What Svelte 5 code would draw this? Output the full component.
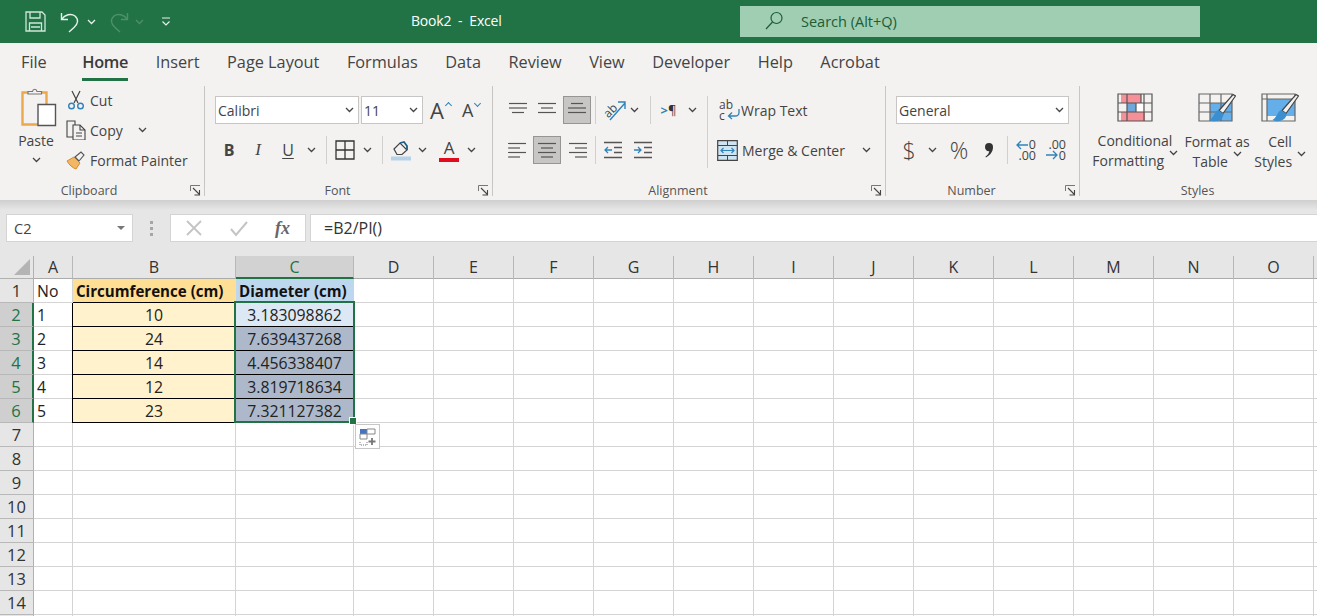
<script>
	const tabs = ['File', 'Home', 'Insert', 'Page Layout', 'Formulas', 'Data', 'Review', 'View', 'Developer', 'Help', 'Acrobat'];
	const columns = ['A', 'B', 'C', 'D', 'E', 'F', 'G', 'H', 'I', 'J', 'K', 'L', 'M', 'N', 'O', ''];
	const data = [
		['No', 'Circumference (cm)', 'Diameter (cm)'],
		['1', '10', '3.183098862'],
		['2', '24', '7.639437268'],
		['3', '14', '4.456338407'],
		['4', '12', '3.819718634'],
		['5', '23', '7.321127382']
	];
	const rowNumbers = Array.from({ length: 15 }, (_, i) => i + 1);

	function cellClass(row, col) {
		const names = ['cell'];
		if (row === 0 && col === 1) names.push('head-b');
		if (row === 0 && col === 2) names.push('head-c');
		if (row === 0 && (col === 1 || col === 2)) names.push('bold');
		if (row > 0 && row < 6 && col === 1) names.push('boxed', 'cream');
		if (row > 0 && row < 6 && col === 2) names.push('boxed', row === 1 ? 'active' : 'picked');
		if (row > 0 && (col === 1 || col === 2)) names.push('center');
		return names.join(' ');
	}
</script>

{#snippet chev(color = '#444')}
	<svg class="chev" width="9" height="6" viewBox="0 0 9 6"><path d="M1 1l3.5 3.5L8 1" fill="none" stroke={color} stroke-width="1.3" /></svg>
{/snippet}

{#snippet launcher()}
	<svg class="launcher" width="11" height="11" viewBox="0 0 11 11">
		<path d="M.5 6V.5h9.500" fill="none" stroke="#777" />
		<path d="M3 3l6 6M9.500 5v5h-5" fill="none" stroke="#444" stroke-width="1.100" />
	</svg>
{/snippet}

{#snippet lines(widths, x = 0)}
	<svg width="20" height="18" viewBox="0 0 20 18">
		{#each widths as w, i (i)}
			<path d={`M${x === 2 ? 20 - w : x === 1 ? (20 - w) / 2 : 0} ${2.5 + i * 4.5}h${w}`} stroke="#555" stroke-width="1.2" />
		{/each}
	</svg>
{/snippet}

{#snippet brush()}
	<path d="M37.500 3L25 20.500l-4-3L35 1.500z" fill="#f3f2f1" stroke="#444" stroke-width="1.200" />
	<path d="M20.500 17c-4 1-4 7-9 10 6 3 14 0 14-6z" fill="#3b8fd0" />
{/snippet}

<div class="app">
	<header class="titlebar">
		<div class="quick">
			<svg class="save" width="21" height="21" viewBox="0 0 21 21" fill="none" stroke="#cfe6d8" stroke-width="1.3">
				<path d="M1 1h16l3 3v16H1z" /><path d="M5 1v6h10V1M4.500 20v-8h12v8M6 16h9" />
			</svg>
			<svg class="undo" width="20" height="22" viewBox="0 0 20 22" fill="none" stroke="#e6f2ea" stroke-width="1.4">
				<path d="M1.500 2v6.500H8" /><path d="M1.500 8.500C5 3.500 11 2 15 5c4 3.500 3 8-1 11.500L9 21" />
			</svg>
			<span class="q-chev">{@render chev('#e6f2ea')}</span>
			<svg class="redo" width="20" height="22" viewBox="0 0 20 22" fill="none" stroke="#4e9169" stroke-width="1.4">
				<path d="M18.500 2v6.500H12" /><path d="M18.500 8.500C15 3.500 9 2 5 5c-4 3.500-3 8 1 11.500L11 21" />
			</svg>
			<span class="q-chev2">{@render chev('#4e9169')}</span>
			<svg class="customize" width="10" height="10" viewBox="0 0 10 10" fill="none" stroke="#e6f2ea" stroke-width="1.2">
				<path d="M1 1h8M1.500 4.500L5 8l3.500-3.500" />
			</svg>
		</div>
		<div class="doc">Book2 &nbsp;-&nbsp; Excel</div>
		<div class="search">
			<svg width="20" height="20" viewBox="0 0 20 20" fill="none" stroke="#1d5c37" stroke-width="1.2">
				<circle cx="12.500" cy="7" r="5.500" /><path d="M8.500 11L2 18" />
			</svg>
			<span>Search (Alt+Q)</span>
		</div>
	</header>

	<nav class="tabs">
		{#each tabs as tab (tab)}
			<span class="tab" class:on={tab === 'Home'}>{tab}</span>
		{/each}
	</nav>

	<section class="ribbon">
		<div class="group clipboard">
			<div class="tools">
				<div class="paste">
					<svg width="36" height="40" viewBox="0 0 36 40" fill="none">
						<path d="M1.500 4.500h24v32h-24z" stroke="#eba84c" stroke-width="2.400" />
						<path d="M7 6V3.500h4.500C12 .5 15.500 .5 16 3.500h4.500V6z" fill="#f3f2f1" stroke="#777" stroke-width="1.200" />
						<path d="M17 16.500h17.500v21H17z" fill="#fff" stroke="#555" stroke-width="1.400" />
					</svg>
					<span>Paste</span>
					{@render chev()}
				</div>
				<div class="small-col">
					<div class="small">
						<svg width="20" height="20" viewBox="0 0 20 20" fill="none">
							<path d="M6 1l6 12M14 1L8 13" stroke="#444" stroke-width="1.200" />
							<circle cx="5.500" cy="16" r="2.800" stroke="#2f83b8" stroke-width="1.400" /><circle cx="14.500" cy="16" r="2.800" stroke="#2f83b8" stroke-width="1.400" />
						</svg>
						<span>Cut</span>
					</div>
					<div class="small">
						<svg width="20" height="20" viewBox="0 0 20 20" fill="none" stroke="#444" stroke-width="1.100">
							<path d="M1 1h8v16H1z" /><path d="M7 5h7l5 5v10H7z" fill="#f3f2f1" /><path d="M14 5v5h5M10 13h6M10 16h6" />
						</svg>
						<span>Copy</span>
						<span class="copy-chev">{@render chev()}</span>
					</div>
					<div class="small">
						<svg width="20" height="20" viewBox="0 0 20 20" fill="none">
							<path d="M1 11l7-4 6 6-4 6C7 18 3 15 1 11z" fill="#f2b766" stroke="#d98a22" stroke-width="1" />
							<path d="M9 7l6-5 3 3-5 6z" fill="#f3f2f1" stroke="#555" stroke-width="1.100" />
						</svg>
						<span>Format Painter</span>
					</div>
				</div>
			</div>
			<div class="label">Clipboard {@render launcher()}</div>
		</div>

		<div class="group font">
			<div class="tools col">
				<div class="row">
					<div class="select family"><span>Calibri</span>{@render chev()}</div>
					<div class="select size"><span>11</span>{@render chev()}</div>
					<span class="grow"><b>A</b><i></i></span>
					<span class="shrink"><b>A</b><i></i></span>
				</div>
				<div class="row second">
					<span class="tb w28 b">B</span>
					<span class="tb w30 it">I</span>
					<span class="tb w30 u">U</span>
					<span class="tb w16">{@render chev()}</span>
					<span class="sep" style="margin-left:7px"></span>
					<span class="tb w26 m5">
						<svg width="20" height="20" viewBox="0 0 20 20" fill="none" stroke="#333" stroke-width="1.300"><path d="M1 1h18v18H1zM10 1v18M1 10h18" /></svg>
					</span>
					<span class="tb w18">{@render chev()}</span>
					<span class="sep" style="margin-left:6px"></span>
					<span class="tb w30 m3">
						<svg width="21" height="21" viewBox="0 0 21 21" fill="none">
							<path d="M3 9l6-6 7 7-5 4.500H6z" stroke="#444" stroke-width="1.200" />
							<path d="M9 3l4-1 3 4v4" stroke="#1f5f8b" stroke-width="1.800" />
							<path d="M0 16.500h20v4H0z" fill="#b5d2e8" />
						</svg>
					</span>
					<span class="tb w12">{@render chev()}</span>
					<span class="tb w32 m5 color-a">A<i></i></span>
					<span class="tb w12">{@render chev()}</span>
				</div>
			</div>
			<div class="label">Font {@render launcher()}</div>
		</div>

		<div class="group alignment">
			<div class="tools">
				<div class="align-col">
					<div class="row">
						<span class="tb w30">{@render lines([18, 18, 12], 1)}</span>
						<span class="tb w28">{@render lines([18, 12, 18], 1)}</span>
						<span class="tb w28 box m2">{@render lines([12, 18, 18], 1)}</span>
						<span class="sep" style="margin-left:4px"></span>
						<span class="tb w22 m8">
							<svg class="orient" width="22" height="22" viewBox="0 0 22 22" fill="none">
								<text x="-1" y="15" transform="rotate(-45 7 11)" font-size="12" fill="#444" font-family="Open Sans, sans-serif">ab</text>
								<path d="M6 21L21 4M14 3h7v7" stroke="#2f83b8" stroke-width="1.400" />
							</svg>
						</span>
						<span class="tb w16">{@render chev()}</span>
						<span class="sep" style="margin-left:8px"></span>
						<span class="tb w27 m4 para"><i>&gt;</i>¶</span>
						<span class="tb w16 m2">{@render chev()}</span>
					</div>
					<div class="row second">
						<span class="tb w30">{@render lines([18, 12, 18, 12], 0)}</span>
						<span class="tb w28 box">{@render lines([18, 12, 18, 12], 1)}</span>
						<span class="tb w28 m2">{@render lines([18, 12, 18, 12], 2)}</span>
						<span class="sep" style="margin-left:4px"></span>
						<span class="tb w20 m8">
							<svg width="20" height="18" viewBox="0 0 20 18" fill="none" stroke-width="1.300">
								<path d="M0 1.500h18M10 6.500h8M10 11.500h8M0 16.500h18" stroke="#555" /><path d="M8 9H1M4 6L1 9l3 3" stroke="#2f83b8" />
							</svg>
						</span>
						<span class="tb w20 m10">
							<svg width="20" height="18" viewBox="0 0 20 18" fill="none" stroke-width="1.300">
								<path d="M0 1.500h18M10 6.500h8M10 11.500h8M0 16.500h18" stroke="#555" /><path d="M0 9h7M4 6l3 3-3 3" stroke="#2f83b8" />
							</svg>
						</span>
					</div>
				</div>
				<span class="sep tall"></span>
				<div class="wrap-col">
					<div class="small wrap">
						<span class="wrap-icon">ab<br />c<svg width="13" height="12" viewBox="0 0 13 12" fill="none" stroke="#2f83b8" stroke-width="1.300"><path d="M12 1v3.500C12 7 10 8 8 8H2M5 4.500L1.500 8 5 11" /></svg></span>
						<span>Wrap Text</span>
					</div>
					<div class="small merge">
						<svg width="21" height="21" viewBox="0 0 21 21" fill="none">
							<path d="M.7.7h19.600v19.600H.7z" stroke="#444" stroke-width="1.200" fill="#cfe4f3" />
							<path d="M1 5.500h19M1 15.500h19M10.500 1v4.500M10.500 15.500V20" stroke="#444" />
							<path d="M4 10.500h13M6.500 8l-2.500 2.500L6.500 13M14.500 8l2.500 2.500-2.500 2.500" stroke="#2f83b8" stroke-width="1.200" />
						</svg>
						<span>Merge &amp; Center</span>
						<span class="merge-chev">{@render chev()}</span>
					</div>
				</div>
			</div>
			<div class="label">Alignment {@render launcher()}</div>
		</div>

		<div class="group number">
			<div class="tools col">
				<div class="row">
					<div class="select general"><span>General</span>{@render chev()}</div>
				</div>
				<div class="row second">
					<span class="tb w26 big">$</span>
					<span class="tb w20">{@render chev()}</span>
					<span class="tb w34 big">%</span>
					<span class="tb w26">
						<svg width="10" height="16" viewBox="0 0 10 16"><path d="M1 5a4 4 0 0 1 8 0c0 5-3 8-7 10.500l-.6-.8C3.500 13 5 11.500 5.300 9.200 2.800 9.500 1 7.500 1 5z" fill="#333" /></svg>
					</span>
					<span class="sep" style="margin-left:5px"></span>
					<span class="tb w20 m8 decimals">
						<svg width="12" height="10" viewBox="0 0 12 10" fill="none" stroke="#2f83b8" stroke-width="1.300"><path d="M12 5H1M5 1L1 5l4 4" /></svg>
						<em>0<br />.00</em>
					</span>
					<span class="tb w20 m10 decimals">
						<svg class="low" width="12" height="10" viewBox="0 0 12 10" fill="none" stroke="#2f83b8" stroke-width="1.300"><path d="M0 5h11M7 1l4 4-4 4" /></svg>
						<em>.00<br />0</em>
					</span>
				</div>
			</div>
			<div class="label">Number {@render launcher()}</div>
		</div>

		<div class="group styles">
			<div class="tools">
				<div class="style-btn w86">
					<svg width="36" height="29" viewBox="0 0 36 29">
						<path d="M4 1h20v9H4zM4 19h24v9H4z" fill="#f58f98" />
						<path d="M10 10h16v9H10z" fill="#fff" /><path d="M10 10h9v9h-9z" fill="#6ea7d8" />
						<path d="M1 1h34v27H1zM1 10h34M1 19h34M10 1v27M19 10v9M27 1v27M24 1v9" fill="none" stroke="#555" stroke-width="1.200" />
					</svg>
					<span>Conditional</span>
					<span>Formatting {@render chev()}</span>
				</div>
				<div class="style-btn w78">
					<svg width="38" height="30" viewBox="0 0 38 30">
						<path d="M12 10h22v18H12z" fill="#64aee9" />
						<path d="M1 1h33v27H1zM1 10h33M1 19h33M12 1v27M23 1v27" fill="none" stroke="#666" stroke-width="1.200" />
						{@render brush()}
					</svg>
					<span>Format as</span>
					<span>Table {@render chev()}</span>
				</div>
				<div class="style-btn w48">
					<svg width="38" height="30" viewBox="0 0 38 30">
						<path d="M6 6h28v17H6z" fill="#64aee9" />
						<path d="M1 1h33v27H1zM1 6h33M6 1v27" fill="none" stroke="#666" stroke-width="1.200" />
						{@render brush()}
					</svg>
					<span>Cell</span>
					<span>Styles {@render chev()}</span>
				</div>
			</div>
			<div class="label">Styles</div>
		</div>
	</section>

	<section class="formula">
		<div class="namebox"><span>C2</span><i></i></div>
		<div class="dots"><i></i><i></i><i></i></div>
		<div class="actions">
			<svg width="18" height="18" viewBox="0 0 18 18" fill="none" stroke="#c4c4c4" stroke-width="1.800"><path d="M2 2l14 14M16 2L2 16" /></svg>
			<svg width="20" height="18" viewBox="0 0 20 18" fill="none" stroke="#c4c4c4" stroke-width="2"><path d="M2 10l5 6L18 3" /></svg>
			<span class="fx">fx</span>
		</div>
		<div class="input">=B2/PI()</div>
	</section>

	<section class="sheet">
		<div class="corner"><i></i></div>
		{#each columns as col, i (i)}
			<div class="col-head" class:current={col === 'C'}>{col}</div>
		{/each}
		{#each rowNumbers as n, r (n)}
			<div class="row-head" class:current={n >= 2 && n <= 6}>{n < 15 ? n : ''}</div>
			{#each columns as _, c (c)}
				<div class={cellClass(r, c)}>{data[r]?.[c] ?? ''}</div>
			{/each}
		{/each}
		<div class="selection"><i></i></div>
		<div class="quick-analysis">
			<svg width="18" height="18" viewBox="0 0 18 18" fill="none">
				<path d="M1 1h7v5H1z" fill="#4472c4" /><path d="M8 1h8v5H8zM1 6h7v5H1z" stroke="#888" />
				<path d="M1 14v3h7v-3" stroke="#777" stroke-dasharray="1 1" /><path d="M13 10v7M9.500 13.500h7" stroke="#777" stroke-width="1.800" />
			</svg>
		</div>
	</section>
</div>

<style>
	:global(body) {
		margin: 0;
		overflow: hidden;
		background: #fff;
	}

	.app {
		height: 616px;
		overflow: hidden;
		font-family: 'Open Sans', 'Noto Sans', sans-serif;
		color: #444;
	}

	.titlebar {
		height: 43px;
		background: #217346;
		display: flex;
		align-items: center;
	}

	.quick {
		width: 411px;
		display: flex;
		align-items: center;
		padding-left: 25px;
		box-sizing: border-box;
	}

	.undo {
		margin-left: 14px;
	}

	.q-chev {
		margin-left: 7px;
		display: flex;
	}

	.redo {
		margin-left: 13px;
	}

	.q-chev2 {
		margin-left: 6px;
		display: flex;
	}

	.customize {
		margin-left: 17px;
	}

	.doc {
		width: 329px;
		color: #fff;
		font-size: 14px;
		letter-spacing: -0.2px;
		margin-top: -3px;
	}

	.search {
		width: 460px;
		height: 31px;
		background: #9fceb2;
		display: flex;
		align-items: center;
		padding-left: 24px;
		box-sizing: border-box;
		gap: 17px;
		color: #1d5c37;
		font-size: 14.500px;
		margin-top: -1px;
	}

	.tabs {
		height: 37px;
		background: #f3f2f1;
		display: flex;
		align-items: center;
		gap: 27.500px;
		padding-left: 21px;
		font-size: 16.300px;
		color: #444;
	}

	.tab {
		position: relative;
		line-height: 37px;
		padding-top: 1px;
	}

	.tab:first-child {
		margin-right: 8px;
	}

	.tab.on {
		font-weight: 600;
		color: #3b3a39;
		letter-spacing: -0.3px;
	}

	.tab.on::after {
		content: '';
		position: absolute;
		left: 0;
		right: 0;
		bottom: 0;
		height: 3px;
		background: #217346;
	}

	.ribbon {
		height: 120px;
		background: #f3f2f1;
		display: flex;
		box-sizing: border-box;
		padding-top: 6px;
	}

	.group {
		display: flex;
		flex-direction: column;
		border-right: 1px solid #c8c6c4;
		height: 110px;
		padding-top: 9px;
		box-sizing: border-box;
		flex: none;
	}

	.clipboard {
		width: 205px;
		padding-left: 20px;
	}

	.font {
		width: 288px;
		padding-left: 10px;
	}

	.alignment {
		width: 393px;
		padding-left: 10px;
	}

	.number {
		width: 194px;
		padding-left: 10px;
	}

	.styles {
		width: 237px;
		border-right: 0;
		padding-left: 12px;
	}

	.tools {
		height: 87px;
		display: flex;
		flex: none;
	}

	.tools.col {
		flex-direction: column;
	}

	.label {
		position: relative;
		text-align: center;
		font-size: 12.500px;
		line-height: 17px;
		color: #555;
		margin-right: 6px;
	}

	.launcher {
		position: absolute;
		right: -3px;
		top: 3px;
	}

	.font .label {
		padding-right: 26px;
	}

	.alignment .label {
		padding-right: 26px;
	}

	.number .label {
		padding-right: 26px;
	}

	.clipboard .label {
		padding-right: 40px;
	}

	.styles .label {
		padding-right: 8px;
	}

	.paste {
		width: 32px;
		display: flex;
		flex-direction: column;
		align-items: center;
		font-size: 14px;
		line-height: 20px;
		color: #444;
		margin-top: -7px;
	}

	.paste svg:first-child {
		flex: none;
		margin-left: 6px;
		margin-bottom: 3px;
	}

	.paste .chev {
		margin-top: 6px;
	}

	.small-col {
		margin-left: 14px;
		display: flex;
		flex-direction: column;
		gap: 10px;
		margin-top: -5px;
	}

	.small {
		display: flex;
		align-items: center;
		gap: 4px;
		height: 20px;
		font-size: 14px;
		color: #444;
		white-space: nowrap;
	}

	.copy-chev {
		margin-left: 11px;
		display: flex;
	}

	.row {
		display: flex;
		align-items: center;
		height: 28px;
		padding-top: 1px;
	}

	.row.second {
		margin-top: 11px;
	}

	.select {
		height: 28px;
		background: #fff;
		border: 1px solid #c8c6c4;
		box-sizing: border-box;
		display: flex;
		align-items: center;
		justify-content: space-between;
		padding: 0 4px 0 2px;
		font-size: 14px;
		color: #444;
	}

	.family {
		width: 144px;
	}

	.size {
		width: 62px;
		margin-left: 2px;
	}

	.general {
		width: 173px;
	}

	.grow,
	.shrink {
		position: relative;
		display: inline-block;
		color: #444;
	}

	.grow b,
	.shrink b {
		font-weight: 400;
	}

	.grow {
		margin-left: 7px;
		width: 32px;
		font-size: 22px;
		line-height: 28px;
	}

	.shrink {
		font-size: 18px;
		line-height: 28px;
		width: 22px;
	}

	.grow i,
	.shrink i {
		position: absolute;
		width: 4px;
		height: 4px;
		border-left: 1.300px solid #2f83b8;
		border-top: 1.300px solid #2f83b8;
		transform: rotate(45deg);
	}

	.grow i {
		left: 16px;
		top: 7px;
	}

	.shrink i {
		left: 13px;
		top: 5px;
		transform: rotate(225deg);
	}

	.tb {
		display: inline-flex;
		align-items: center;
		justify-content: center;
		height: 28px;
		flex: none;
		box-sizing: border-box;
	}

	.w12 { width: 12px; }
	.w16 { width: 16px; }
	.w18 { width: 18px; }
	.w20 { width: 20px; }
	.w22 { width: 22px; }
	.w26 { width: 26px; }
	.w27 { width: 27px; }
	.w28 { width: 28px; }
	.w30 { width: 30px; }
	.w32 { width: 32px; }
	.w34 { width: 34px; }
	.m2 { margin-left: 2px; }
	.m3 { margin-left: 3px; }
	.m4 { margin-left: 4px; }
	.m5 { margin-left: 5px; }
	.m8 { margin-left: 8px; }
	.m10 { margin-left: 10px; }

	.b {
		font-weight: 700;
		font-size: 16px;
		color: #444;
	}

	.it {
		font-style: italic;
		font-size: 17px;
		font-family: 'Liberation Serif', serif;
	}

	.u {
		font-size: 16px;
		text-decoration: underline;
		text-underline-offset: 2px;
	}

	.color-a {
		position: relative;
		font-size: 17px;
		padding-bottom: 6px;
	}

	.color-a i {
		position: absolute;
		left: 6px;
		right: 6px;
		bottom: 2px;
		height: 4px;
		background: #e00b1c;
	}

	.sep {
		width: 1px;
		height: 28px;
		background: #d2d0ce;
		flex: none;
	}

	.sep.tall {
		height: 72px;
		margin-top: 1px;
	}

	.box {
		background: #c8c6c4;
		border: 1px solid #979593;
	}

	.align-col {
		width: 204px;
		flex: none;
	}

	.orient {
		overflow: visible;
	}

	.para {
		font-size: 13px;
		color: #333;
	}

	.para i {
		font-style: normal;
		color: #2f83b8;
		font-weight: 700;
	}

	.wrap-col {
		margin-left: 9px;
		display: flex;
		flex-direction: column;
		gap: 20px;
		padding-top: 5px;
	}

	.wrap-icon {
		position: relative;
		display: block;
		width: 20px;
		height: 26px;
		font-size: 12px;
		line-height: 11px;
		padding-top: 2px;
		box-sizing: border-box;
	}

	.wrap-icon svg {
		position: absolute;
		left: 8px;
		top: 11px;
	}

	.wrap {
		gap: 2px;
		margin-left: 2px;
	}

	.merge {
		gap: 4px;
	}

	.merge-chev {
		margin-left: 13px;
		display: flex;
	}

	.big {
		font-size: 23px;
		font-weight: 300;
	}

	.decimals {
		position: relative;
		font-size: 12.500px;
		line-height: 11px;
		justify-content: flex-end;
	}

	.decimals em {
		font-style: normal;
		text-align: right;
	}

	.decimals svg {
		position: absolute;
		left: 0;
		top: 4px;
	}

	.decimals svg.low {
		top: 14px;
	}

	.style-btn {
		display: flex;
		flex-direction: column;
		align-items: center;
		font-size: 14px;
		line-height: 20px;
		color: #444;
		flex: none;
		white-space: nowrap;
		margin-top: -2px;
	}

	.style-btn span {
		height: 20px;
	}

	.style-btn span + span {
		margin-top: -1px;
	}

	.style-btn svg:first-child {
		margin-bottom: 9px;
		flex: none;
	}

	.style-btn .chev {
		margin-left: 1px;
		vertical-align: 1px;
	}

	.w86 { width: 86px; }
	.w78 { width: 78px; }
	.w48 { width: 48px; }

	.formula {
		height: 56px;
		background: linear-gradient(#cfcfcf, #e6e6e6 10px);
		display: flex;
		align-items: flex-start;
		padding: 14px 0 0 6px;
		box-sizing: border-box;
	}

	.namebox,
	.actions,
	.input {
		height: 28px;
		background: #fff;
		border: 1px solid #d4d4d4;
		box-sizing: border-box;
		display: flex;
		align-items: center;
	}

	.namebox {
		width: 127px;
		justify-content: space-between;
		padding: 0 7px;
		font-size: 14.500px;
	}

	.namebox i {
		border-left: 4px solid transparent;
		border-right: 4px solid transparent;
		border-top: 4px solid #777;
	}

	.dots {
		width: 37px;
		height: 28px;
		display: flex;
		flex-direction: column;
		align-items: center;
		justify-content: center;
		gap: 3px;
	}

	.dots i {
		width: 3px;
		height: 3px;
		background: #a6a6a6;
	}

	.actions {
		width: 136px;
		padding-left: 14px;
		gap: 26px;
	}

	.fx {
		font-family: 'Liberation Serif', serif;
		font-style: italic;
		font-weight: 700;
		font-size: 18px;
		color: #666;
	}

	.input {
		flex: 1;
		margin-left: 4px;
		padding-left: 13px;
		font-size: 16px;
		color: #333;
		border-right: 0;
	}

	.sheet {
		position: relative;
		display: grid;
		grid-template-columns: 34px 39px 163px 118px repeat(12, 80px) 1fr;
		grid-template-rows: 23px;
		grid-auto-rows: 24px;
	}

	.corner,
	.col-head,
	.row-head {
		background: #e6e6e6;
		box-sizing: border-box;
		color: #333;
	}

	.corner {
		position: relative;
		border-right: 1px solid #b1b1b1;
		border-bottom: 1px solid #b1b1b1;
	}

	.corner i {
		position: absolute;
		right: 3px;
		bottom: 3px;
		border-left: 16px solid transparent;
		border-bottom: 16px solid #b4b4b4;
	}

	.col-head {
		border-right: 1px solid #b8b8b8;
		border-bottom: 1px solid #ababab;
		text-align: center;
		font-size: 16px;
		line-height: 23px;
	}

	.col-head.current {
		background: #d2d2d2;
		color: #217346;
		border-bottom: 2px solid #217346;
	}

	.row-head {
		border-right: 1px solid #b1b1b1;
		border-bottom: 1px solid #b8b8b8;
		text-align: center;
		font-size: 16.500px;
		line-height: 24px;
	}

	.row-head.current {
		background: #cfcfcf;
		color: #217346;
		border-right: 2px solid #217346;
	}

	.cell {
		box-sizing: border-box;
		border-right: 1px solid #d4d4d4;
		border-bottom: 1px solid #d4d4d4;
		font-size: 15.800px;
		line-height: 24px;
		color: #222;
		padding-left: 3px;
		white-space: nowrap;
	}

	.cell.center {
		text-align: center;
		padding-left: 0;
	}

	.cell.bold {
		font-weight: 700;
		font-size: 15.100px;
		color: #111;
	}

	.head-b {
		background: #ffdf94;
		border-color: #ffdf94;
		border-bottom-color: #000;
	}

	.head-c {
		background: #bdd7ee;
		border-color: #bdd7ee;
	}

	.boxed {
		border-right-color: #000;
		border-bottom-color: #000;
	}

	.cream {
		background: #fff2cc;
		box-shadow: -1px 0 0 #000;
	}

	.active {
		background: #dce9f5;
	}

	.picked {
		background: #adb9ca;
	}

	/* row 2 to row 6 of column C */
	.selection {
		position: absolute;
		left: 234px;
		top: 45px;
		width: 121px;
		height: 122px;
		border: 2px solid #217346;
		box-sizing: border-box;
		pointer-events: none;
	}

	.selection i {
		position: absolute;
		right: -4px;
		bottom: -4px;
		width: 6px;
		height: 6px;
		background: #217346;
		border: 1px solid #fff;
	}

	.quick-analysis {
		position: absolute;
		left: 355px;
		top: 168px;
		width: 25px;
		height: 25px;
		background: #fff;
		border: 1px solid #c6c6c6;
		box-sizing: border-box;
		display: flex;
		align-items: center;
		justify-content: center;
	}
</style>
